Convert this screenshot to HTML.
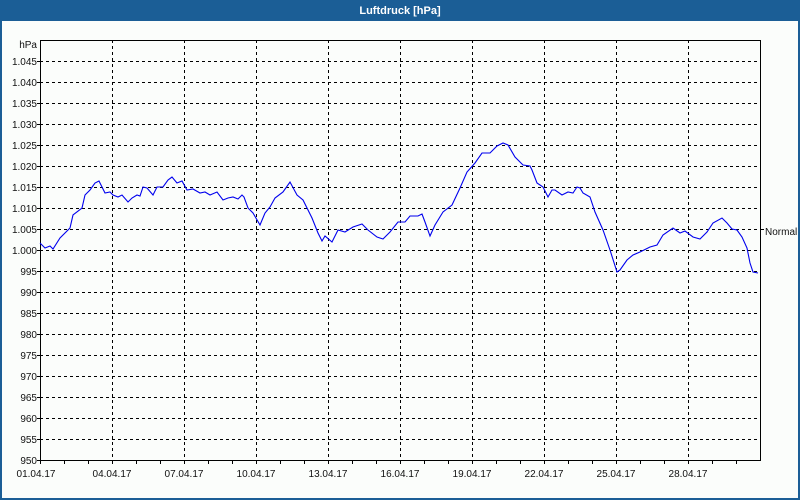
<!DOCTYPE html>
<html><head><meta charset="utf-8"><style>
html,body{margin:0;padding:0;width:800px;height:500px;overflow:hidden;background:#fbfdfb}
svg{display:block}
text{font-family:"Liberation Sans",sans-serif;font-size:10px;fill:#111}
</style></head><body>
<svg width="800" height="500" viewBox="0 0 800 500" xmlns="http://www.w3.org/2000/svg">
<rect x="0" y="0" width="800" height="500" fill="#1b5e96"/>
<rect x="2" y="21" width="796" height="477" fill="#fbfdfb"/>
<text x="400" y="14" text-anchor="middle" style="fill:#fff;font-weight:bold;font-size:11px">Luftdruck [hPa]</text>
<g stroke="#000" stroke-width="1" stroke-dasharray="3,3" shape-rendering="crispEdges">
<path d="M40 61.5H760M40 82.5H760M40 103.5H760M40 124.5H760M40 145.5H760M40 166.5H760M40 187.5H760M40 208.5H760M40 229.5H760M40 250.5H760M40 271.5H760M40 292.5H760M40 313.5H760M40 334.5H760M40 355.5H760M40 376.5H760M40 397.5H760M40 418.5H760M40 439.5H760"/>
<path d="M112.5 40V460M184.5 40V460M256.5 40V460M328.5 40V460M400.5 40V460M472.5 40V460M544.5 40V460M616.5 40V460M688.5 40V460"/>
</g>
<g stroke="#000" stroke-width="1" fill="none" shape-rendering="crispEdges">
<rect x="40.5" y="40.5" width="720" height="420"/>
<path d="M37 61.5H40M37 82.5H40M37 103.5H40M37 124.5H40M37 145.5H40M37 166.5H40M37 187.5H40M37 208.5H40M37 229.5H40M37 250.5H40M37 271.5H40M37 292.5H40M37 313.5H40M37 334.5H40M37 355.5H40M37 376.5H40M37 397.5H40M37 418.5H40M37 439.5H40M37 460.5H40"/>
<path d="M760 229.5H764"/>
<path d="M40.5 461V464M64.5 461V464M88.5 461V464M112.5 461V464M136.5 461V464M160.5 461V464M184.5 461V464M208.5 461V464M232.5 461V464M256.5 461V464M280.5 461V464M304.5 461V464M328.5 461V464M352.5 461V464M376.5 461V464M400.5 461V464M424.5 461V464M448.5 461V464M472.5 461V464M496.5 461V464M520.5 461V464M544.5 461V464M568.5 461V464M592.5 461V464M616.5 461V464M640.5 461V464M664.5 461V464M688.5 461V464M712.5 461V464M736.5 461V464"/>
</g>
<g text-anchor="end">
<text x="37" y="48">hPa</text>
<text x="37" y="65">1.045</text><text x="37" y="86">1.040</text><text x="37" y="107">1.035</text><text x="37" y="128">1.030</text><text x="37" y="149">1.025</text><text x="37" y="170">1.020</text><text x="37" y="191">1.015</text><text x="37" y="212">1.010</text><text x="37" y="233">1.005</text><text x="37" y="254">1.000</text><text x="37" y="275">995</text><text x="37" y="296">990</text><text x="37" y="317">985</text><text x="37" y="338">980</text><text x="37" y="359">975</text><text x="37" y="380">970</text><text x="37" y="401">965</text><text x="37" y="422">960</text><text x="37" y="443">955</text><text x="37" y="464">950</text>
</g>
<g text-anchor="middle">
<text x="36" y="477">01.04.17</text><text x="112" y="477">04.04.17</text><text x="184" y="477">07.04.17</text><text x="256" y="477">10.04.17</text><text x="328" y="477">13.04.17</text><text x="400" y="477">16.04.17</text><text x="472" y="477">19.04.17</text><text x="544" y="477">22.04.17</text><text x="616" y="477">25.04.17</text><text x="688" y="477">28.04.17</text>
</g>
<text x="765" y="235">Normal</text>
<polyline fill="none" stroke="#0000ee" stroke-width="1.1" points="40,243 45,248 50,246 53,249 60,238 70,228 73,215 82,208 85,195 90,190 95,183 99,181 105,193 110,192 113,195 118,197 122,195 128,202 132,198 137,195 140,196 143,187 147,188 153,195 157,187 163,187 168,180 172,177 177,183 182,181 187,190 193,189 200,193 205,192 210,195 217,192 223,200 228,198 233,197 238,199 242,195 244,197 248,208 253,213 260,225 265,213 270,207 275,198 283,192 290,182 297,195 303,200 312,218 318,233 322,241 325,236 332,242 338,230 345,232 353,227 362,224 368,230 377,237 383,239 390,232 398,222 405,222 410,216 418,216 422,214 425,222 430,236 435,225 443,212 452,205 460,188 467,172 475,163 482,153 490,153 497,146 503,143 508,145 515,157 523,165 530,166 532,170 537,183 543,187 548,197 552,190 555,190 562,195 568,192 573,193 577,187 580,188 583,193 590,197 595,212 603,230 610,250 617,272 620,270 627,260 633,255 640,252 650,247 657,245 663,235 673,228 680,233 685,231 693,237 700,239 707,232 713,223 722,218 727,223 732,229 737,230 742,237 747,248 750,263 753,272 758,273"/>
</svg>
</body></html>
